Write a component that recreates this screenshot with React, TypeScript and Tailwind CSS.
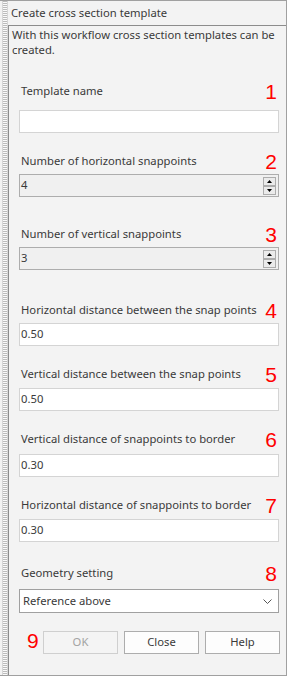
import React from "react";

const font = "font-['Noto_Sans','Liberation_Sans',sans-serif]";

type Field = {
  label: string;
  num: string;
  value: string;
  kind: "text" | "spin";
  mt: string;
  gap: string;
};

const fields: Field[] = [
  { label: "Template name", num: "1", value: "", kind: "text", mt: "mt-[22px]", gap: "mt-[7px]" },
  { label: "Number of horizontal snappoints", num: "2", value: "4", kind: "spin", mt: "mt-[16px]", gap: "mt-[1px]" },
  { label: "Number of vertical snappoints", num: "3", value: "3", kind: "spin", mt: "mt-[25px]", gap: "mt-[1px]" },
  { label: "Horizontal distance between the snap points", num: "4", value: "0.50", kind: "text", mt: "mt-[28px]", gap: "mt-[1px]" },
  { label: "Vertical distance between the snap points", num: "5", value: "0.50", kind: "text", mt: "mt-[16px]", gap: "mt-[2px]" },
  { label: "Vertical distance of snappoints to border", num: "6", value: "0.30", kind: "text", mt: "mt-[16px]", gap: "mt-[3px]" },
  { label: "Horizontal distance of snappoints to border", num: "7", value: "0.30", kind: "text", mt: "mt-[16px]", gap: "mt-[2px]" },
];

function Num({ n }: { n: string }) {
  return (
    <span className="font-['Liberation_Sans',sans-serif] text-[21px] leading-none text-[#ff0000]">
      {n}
    </span>
  );
}

function LabelRow({ label, n }: { label: string; n: string }) {
  return (
    <div className="flex h-[24px] items-center justify-between pl-[12px] pr-[9px]">
      <span className="text-[11.25px]">{label}</span>
      <Num n={n} />
    </div>
  );
}

function SpinBtn({ up }: { up: boolean }) {
  return (
    <div className="flex h-[9px] w-[13px] items-center justify-center border border-[#adadad] bg-[#ebebeb]">
      <svg width="5" height="3" viewBox="0 0 5 3">
        {up ? <polygon points="0,3 5,3 2.5,0" fill="#000" /> : <polygon points="0,0 5,0 2.5,3" fill="#000" />}
      </svg>
    </div>
  );
}

function Input({ f }: { f: Field }) {
  if (f.kind === "spin") {
    return (
      <div className={`${f.gap} ml-[10px] mr-[7px] flex h-[23px] items-center justify-between border border-[#adadad] bg-[#f0f0f0] pl-[1px] pr-[2px]`}>
        <span className="text-[11.25px]">{f.value}</span>
        <div className="flex flex-col">
          <SpinBtn up />
          <SpinBtn up={false} />
        </div>
      </div>
    );
  }
  return (
    <div className={`${f.gap} ml-[10px] mr-[7px] flex h-[23px] items-center border border-[#d4d4d4] bg-white pl-[1px]`}>
      <span className="text-[11.25px]">{f.value}</span>
    </div>
  );
}

export default function App() {
  return (
    <div className={`${font} flex h-[676px] w-[287px] border-y border-r border-[#a0a0a0] bg-[#f3f3f3] text-[#3a3a3a]`}>
      <div className="ml-[2px] w-[6px] shrink-0 border-x border-[#d6d6d6] bg-[repeating-linear-gradient(to_bottom,#bcbcbc_0px,#bcbcbc_1px,#fafafa_1px,#fafafa_2px)]" />
      <div className="flex min-w-0 flex-1 flex-col">
        <div className="flex h-[24px] items-center pl-[3px] text-[11.25px]">Create cross section template</div>
        <div className="flex-1 border-l border-t border-[#8c8c8c]">
          <div className="whitespace-nowrap pl-[3px] pt-[1px] text-[11.25px] leading-[15px]">
            With this workflow cross section templates can be
            <br />
            created.
          </div>

          {fields.map((f) => (
            <div key={f.num} className={f.mt}>
              <LabelRow label={f.label} n={f.num} />
              <Input f={f} />
            </div>
          ))}

          <div className="mt-[19px]">
            <LabelRow label="Geometry setting" n="8" />
            <div className="ml-[10px] mr-[7px] mt-[4px] flex h-[24px] items-center justify-between border border-[#a0a0a0] bg-white pl-[3px] pr-[6px]">
              <span className="text-[11.25px]">Reference above</span>
              <svg width="9" height="5" viewBox="0 0 9 5">
                <polyline points="0.5,0.5 4.5,4.5 8.5,0.5" fill="none" stroke="#555" strokeWidth="1" />
              </svg>
            </div>
          </div>

          <div className="mt-[17px] flex items-center pl-[18px] pr-[6px]">
            <div className="w-[19px]">
              <Num n="9" />
            </div>
            <div className="flex gap-[6px]">
              <button className="h-[23px] w-[75px] border border-[#cfcfcf] bg-[#f4f4f4] text-[11.25px] text-[#a3a3a3]">OK</button>
              <button className="h-[23px] w-[75px] border border-[#adadad] bg-[#fdfdfd] text-[11.25px]">Close</button>
              <button className="h-[23px] w-[75px] border border-[#adadad] bg-[#fdfdfd] text-[11.25px]">Help</button>
            </div>
          </div>
        </div>
      </div>
    </div>
  );
}
